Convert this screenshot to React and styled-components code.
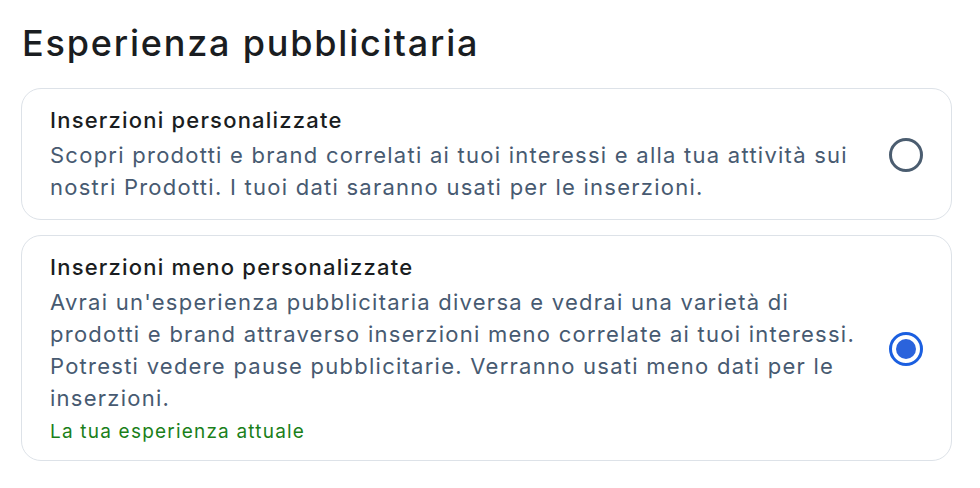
import React, { useState } from 'react';
import styled, { createGlobalStyle } from 'styled-components';

const GlobalStyle = createGlobalStyle`
  html, body {
    margin: 0;
    padding: 0;
    background: #ffffff;
  }
  body {
    font-family: Inter, "Noto Sans", "Liberation Sans", sans-serif;
    -webkit-font-smoothing: antialiased;
  }
`

const Page = styled.div`
  padding: 21px 28px 0 21px;
`

const Heading = styled.h2`
  margin: 0 0 23px 1px;
  font-size: 36px;
  line-height: 44px;
  font-weight: 500;
  letter-spacing: 1.8px;
  color: #1a1d21;
`

const OptionList = styled.div`
  display: flex;
  flex-direction: column;
  gap: 15px;
`

const Card = styled.label`
  display: flex;
  align-items: center;
  gap: 12px;
  padding: 17px 28px 16px 28px;
  border: 1px solid #dde2e8;
  border-radius: 20px;
  background: #fff;
  cursor: pointer;
`

const TextCol = styled.div`
  flex: 1;
  min-width: 0;
`

const Title = styled.div`
  font-size: 22px;
  line-height: 28px;
  font-weight: 500;
  letter-spacing: 1.2px;
  color: #1a1d21;
  margin-bottom: 5px;
`

const Description = styled.div`
  font-size: 22px;
  line-height: 32px;
  letter-spacing: 1.25px;
  color: #475a71;
`

const Status = styled.div`
  margin-top: 6px;
  font-size: 19px;
  line-height: 24px;
  letter-spacing: 1.2px;
  color: #1a7f1a;
`

const Radio = styled.span`
  flex: none;
  width: 34px;
  height: 34px;
  box-sizing: border-box;
  border-radius: 50%;
  border: 3px solid ${p => (p.$checked ? '#1b5fe0' : '#4b5d70')};
  display: flex;
  align-items: center;
  justify-content: center;

  &::after {
    content: '';
    width: 20px;
    height: 20px;
    border-radius: 50%;
    background: #2b63dc;
    display: ${p => (p.$checked ? 'block' : 'none')};
  }
`

const options = [
  {
    id: 'full',
    title: 'Inserzioni personalizzate',
    text: 'Scopri prodotti e brand correlati ai tuoi interessi e alla tua attività sui nostri Prodotti. I tuoi dati saranno usati per le inserzioni.',
  },
  {
    id: 'less',
    title: 'Inserzioni meno personalizzate',
    text: "Avrai un'esperienza pubblicitaria diversa e vedrai una varietà di prodotti e brand attraverso inserzioni meno correlate ai tuoi interessi. Potresti vedere pause pubblicitarie. Verranno usati meno dati per le inserzioni.",
    status: 'La tua esperienza attuale',
  },
]

export default function App() {
  const [selected, setSelected] = useState('less')
  return (
    <>
      <GlobalStyle />
      <Page>
        <Heading>Esperienza pubblicitaria</Heading>
        <OptionList>
          {options.map(o => (
            <Card key={o.id} onClick={() => setSelected(o.id)}>
              <TextCol>
                <Title>{o.title}</Title>
                <Description>{o.text}</Description>
                {o.status && <Status>{o.status}</Status>}
              </TextCol>
              <Radio $checked={selected === o.id} />
            </Card>
          ))}
        </OptionList>
      </Page>
    </>
  )
}
